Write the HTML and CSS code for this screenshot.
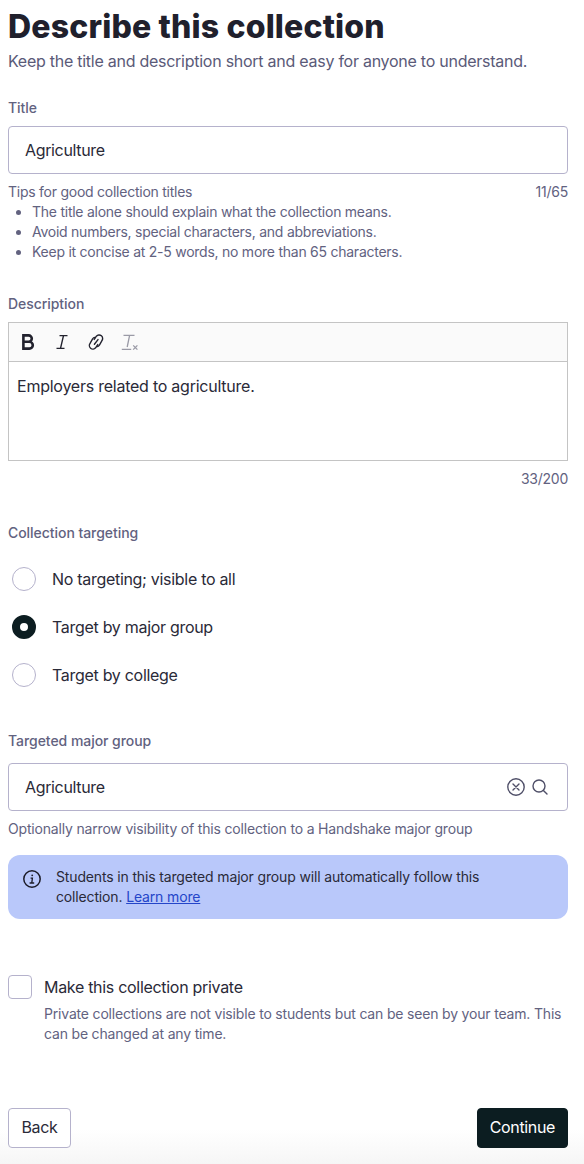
FILE: index.html
```html
<!DOCTYPE html>
<html lang="en">
<head>
    <meta charset="UTF-8">
    <title>Describe this collection</title>
    <link rel="stylesheet" href="styles.css">
</head>
<body>
    <div class="container">
        <h1>Describe this collection</h1>
        <p class="subtitle">Keep the title and description short and easy for anyone to understand.</p>

        <section class="field-title">
            <div class="label">Title</div>
            <div class="input">Agriculture</div>
            <div class="help-row">
                <span>Tips for good collection titles</span>
                <span>11/65</span>
            </div>
            <ul class="tips">
                <li>The title alone should explain what the collection means.</li>
                <li>Avoid numbers, special characters, and abbreviations.</li>
                <li>Keep it concise at 2-5 words, no more than 65 characters.</li>
            </ul>
        </section>

        <section class="field-description">
            <div class="label">Description</div>
            <div class="editor">
                <div class="toolbar">
                    <svg viewBox="0 0 20 20" width="20" height="20" fill="none" stroke="#22222e" stroke-width="2.6"><path d="M5.4 3.4h5.2a3.2 3.2 0 0 1 0 6.4H5.4zM5.4 9.8h6a3.4 3.4 0 0 1 0 6.8h-6z"/></svg>
                    <svg viewBox="0 0 20 20" width="20" height="20" fill="none" stroke="#22222e" stroke-width="1.4"><path d="M7.5 3.6h8M4.5 16.4h8M11.5 3.6 8.5 16.4"/></svg>
                    <svg viewBox="0 0 20 20" width="20" height="20" fill="none" stroke="#22222e" stroke-width="1.4" stroke-linecap="round"><path d="M8.4 12.2 12 7.6"/><path d="M8.2 7.4 10.4 4.2a3.5 3.5 0 0 1 5.4 4.6l-2.4 4.4c-1 1.4-2 1.6-2.6 1.2"/><path d="M11.8 12.6 9.6 15.8a3.5 3.5 0 0 1-5.4-4.6l2.4-4.4c1-1.4 2-1.6 2.6-1.2"/></svg>
                    <svg viewBox="0 0 20 20" width="20" height="20" fill="none" stroke="#9a9aa6" stroke-width="1.3"><path d="M3.5 3.4h11M9.6 3.4 7.2 15M1.8 17.4h9.4"/><path d="M13.2 13.4l4.2 4.2M17.4 13.4l-4.2 4.2"/></svg>
                </div>
                <div class="editor-body">Employers related to agriculture.</div>
            </div>
            <div class="counter">33/200</div>
        </section>

        <section class="field-targeting">
            <div class="label">Collection targeting</div>
            <div class="radios">
                <div class="radio-row"><span class="radio"></span>No targeting; visible to all</div>
                <div class="radio-row"><span class="radio checked"></span>Target by major group</div>
                <div class="radio-row"><span class="radio"></span>Target by college</div>
            </div>
        </section>

        <section class="field-major">
            <div class="label">Targeted major group</div>
            <div class="input search-input">
                <span>Agriculture</span>
                <span class="search-icons">
                    <svg viewBox="0 0 20 20" width="20" height="20" fill="none" stroke="#4f4f68" stroke-width="1.4" stroke-linecap="round"><circle cx="10" cy="10" r="8.2"/><path d="M7 7l6 6M13 7l-6 6"/></svg>
                    <svg viewBox="0 0 20 20" width="20" height="20" fill="none" stroke="#4f4f68" stroke-width="1.4" stroke-linecap="round"><circle cx="9" cy="9" r="6"/><path d="M13.4 13.4 17 17"/></svg>
                </span>
            </div>
            <div class="hint">Optionally narrow visibility of this collection to a Handshake major group</div>
            <div class="banner">
                <svg viewBox="0 0 20 20" width="20" height="20" fill="none" stroke="#1c1c28" stroke-width="1.5"><circle cx="10" cy="10" r="8.2"/><path d="M8.6 9.2h1.8l-.6 4.6M7.6 14h4.6" stroke-width="1.3"/><circle cx="10.2" cy="6.3" r=".9" fill="#1c1c28" stroke="none"/></svg>
                <p>Students in this targeted major group will automatically follow this collection. <a href="#">Learn more</a></p>
            </div>
        </section>

        <section class="field-private">
            <div class="check-row"><span class="checkbox"></span>Make this collection private</div>
            <p class="check-help">Private collections are not visible to students but can be seen by your team. This can be changed at any time.</p>
        </section>
    </div>

    <div class="footer">
        <button class="btn-back" type="button">Back</button>
        <button class="btn-continue" type="button">Continue</button>
    </div>
</body>
</html>
```

FILE: styles.css
```css
* {
    box-sizing: border-box;
}
body {
    margin: 0;
    height: 1164px;
    overflow: hidden;
    background-color: #fff;
    font-family: Inter, "Liberation Sans", sans-serif;
    color: #2a2a38;
}
.container {
    padding: 7px 16px 0 8px;
}
h1 {
    margin: 0;
    font-size: 32px;
    line-height: 40px;
    font-weight: 800;
    letter-spacing: 0.17px;
    color: #20202c;
}
.subtitle {
    margin: 2px 0 0;
    font-size: 16px;
    line-height: 24px;
    letter-spacing: -0.26px;
    color: #5a5a78;
}
.label {
    font-size: 14px;
    line-height: 20px;
    font-weight: 500;
    letter-spacing: -0.05px;
    color: #62627f;
}
.field-title {
    margin-top: 25px;
}
.input {
    display: flex;
    align-items: center;
    height: 48px;
    margin-top: 8px;
    padding: 0 16px;
    border: 1px solid #b5b2cc;
    border-radius: 4px;
    font-size: 16px;
    letter-spacing: -0.35px;
}
.help-row {
    display: flex;
    justify-content: space-between;
    margin-top: 8px;
    font-size: 14px;
    line-height: 20px;
    letter-spacing: -0.25px;
    color: #62627f;
}
.tips {
    margin: 0;
    padding-left: 24px;
    font-size: 14px;
    line-height: 20px;
    letter-spacing: -0.25px;
    color: #62627f;
}
.field-description {
    margin-top: 32px;
}
.editor {
    margin-top: 8px;
    border: 1px solid #c4c4c4;
}
.toolbar {
    display: flex;
    align-items: center;
    gap: 14px;
    height: 39px;
    padding-left: 9px;
    background-color: #fafafa;
    border-bottom: 1px solid #c4c4c4;
}
.editor-body {
    height: 98px;
    padding: 14px 8px;
    font-size: 16px;
    line-height: 20px;
    letter-spacing: -0.24px;
}
.counter {
    margin-top: 8px;
    text-align: right;
    font-size: 14px;
    line-height: 20px;
    letter-spacing: -0.25px;
    color: #62627f;
}
.field-targeting {
    margin-top: 34px;
}
.radios {
    margin-top: 12px;
}
.radio-row {
    display: flex;
    align-items: center;
    gap: 16px;
    height: 48px;
    padding-left: 4px;
    font-size: 16px;
    letter-spacing: -0.3px;
}
.radio {
    width: 24px;
    height: 24px;
    border: 1px solid #b5b2cc;
    border-radius: 50%;
    background-color: #fff;
}
.radio.checked {
    border: 8px solid #0c1d21;
}
.field-major {
    margin-top: 32px;
}
.field-major .input {
    margin-top: 12px;
}
.search-input {
    justify-content: space-between;
    padding-right: 17px;
}
.search-icons {
    display: flex;
    gap: 4px;
}
.hint {
    margin-top: 8px;
    font-size: 14px;
    line-height: 20px;
    letter-spacing: -0.18px;
    color: #62627f;
}
.banner {
    display: flex;
    gap: 14px;
    height: 64px;
    margin-top: 16px;
    padding: 12px 48px 12px 14px;
    background-color: #b9c8fa;
    border-radius: 12px;
}
.banner svg {
    flex: none;
    margin-top: 2px;
}
.banner p {
    margin: 0;
    font-size: 14px;
    line-height: 20px;
    letter-spacing: -0.15px;
    color: #2a2a38;
}
.banner a {
    color: #2445c9;
}
.field-private {
    margin-top: 56px;
}
.check-row {
    display: flex;
    align-items: center;
    gap: 12px;
    font-size: 16px;
    line-height: 24px;
    letter-spacing: -0.3px;
}
.checkbox {
    width: 24px;
    height: 24px;
    border: 1px solid #b5b2cc;
    border-radius: 4px;
}
.check-help {
    margin: 5px 0 0 36px;
    font-size: 14px;
    line-height: 20px;
    letter-spacing: -0.18px;
    color: #62627f;
}
.footer {
    position: absolute;
    left: 0;
    right: 0;
    bottom: 0;
    display: flex;
    justify-content: space-between;
    height: 76px;
    padding: 20px 16px 0 8px;
    background: linear-gradient(#fff 55%, #f6f6f6);
}
.footer button {
    height: 40px;
    min-width: 63px;
    padding: 0 12px 2px;
    border-radius: 4px;
    font-family: inherit;
    font-size: 16px;
    letter-spacing: -0.35px;
    cursor: pointer;
}
.btn-back {
    background-color: #fff;
    border: 1px solid #b5b2cc;
    color: #2a2a38;
}
.btn-continue {
    background-color: #0c1d21;
    border: 1px solid #0c1d21;
    color: #fff;
}
```
